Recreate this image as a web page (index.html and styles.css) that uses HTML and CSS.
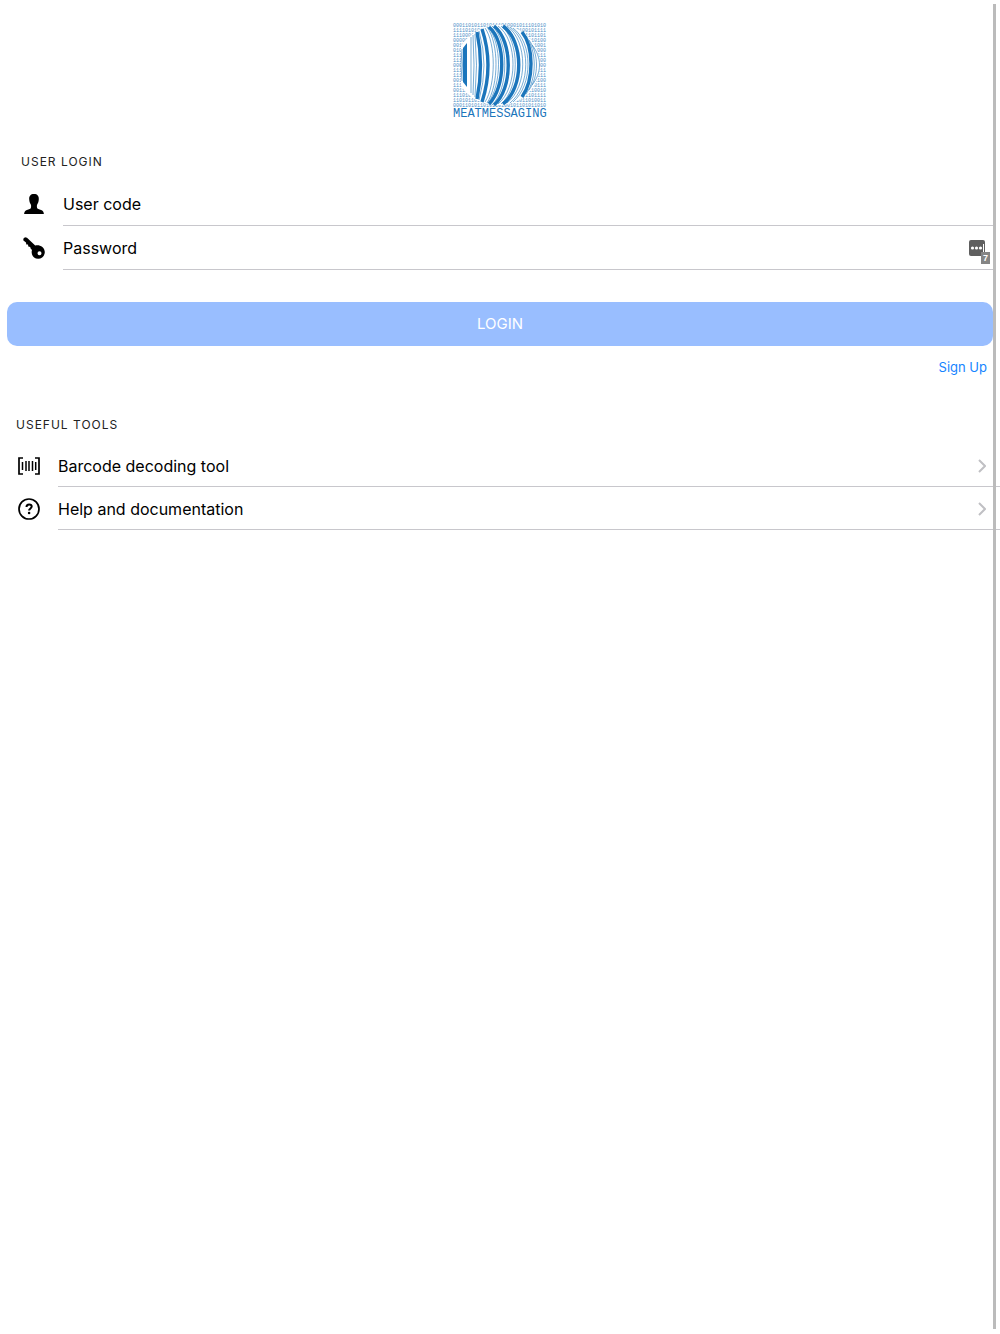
FILE: index.html
```html
<!DOCTYPE html>
<html lang="en">
<head>
    <meta charset="UTF-8">
    <meta name="viewport" content="width=device-width, initial-scale=1.0">
    <title>Meat Messaging</title>
    <link rel="stylesheet" href="styles.css">
</head>
<body>

<header class="logo">
    <svg width="96" height="96" viewBox="0 0 96 96" role="img" aria-label="Meatmessaging">
        <!-- Binary background -->
        <g class="logo-bits">
            <text x="1" y="4">0001101011010111010001011101010</text>
            <text x="1" y="9">1111010101101011010110100101111</text>
            <text x="1" y="14">1110001011010010110101101101101</text>
            <text x="1" y="19">0000010110101101001011010110100</text>
            <text x="1" y="24">0010101101001011010110101101001</text>
            <text x="1" y="29">0101101011010110100101101011000</text>
            <text x="1" y="34">1111010110101101011010010110111</text>
            <text x="1" y="39">1110101101011010010110101101100</text>
            <text x="1" y="44">0001011010010110101101011010000</text>
            <text x="1" y="49">1111010110101101001011010110111</text>
            <text x="1" y="54">1110101101001011010110101101111</text>
            <text x="1" y="59">0010110101101011010010110101100</text>
            <text x="1" y="64">1111010010110101101011010110111</text>
            <text x="1" y="69">0011010110101101001011010110010</text>
            <text x="1" y="74">1110101101011010110100101101111</text>
            <text x="1" y="79">1101011010010110101101011010011</text>
            <text x="1" y="84">0001101011010110100101101011010</text>
        </g>
        <!-- Barcode globe -->
        <g transform="translate(1)">
            <path fill="#fff" d="M8 23C17 10 30 2 45 2c24 0 42 18 42 40S69 82 45 82C30 82 17 76 8 63z"/>
            <path fill="#1b75bb" d="M10 25L14 20V64L10 59Q9 42 10 25z"/>
            <g class="logo-thick">
                <path d="M24 9Q31 42 24 76"/>
                <path d="M29 6Q41 42 29 79"/>
                <path d="M36 4C53 18 53 64 36 81"/>
                <path d="M41 3C60 18 60 66 41 82"/>
                <path d="M50 3C71 18 71 65 50 81"/>
                <path d="M69 9C81 24 81 57 69 74"/>
            </g>
            <g class="logo-thin">
                <path d="M9 26Q7 42 9 58"/>
                <path d="M18 14Q18 42 18 70"/>
                <path d="M20 12Q22 42 20 72"/>
                <path d="M22 11Q25 42 22 74"/>
                <path d="M26 8Q36 42 26 77"/>
                <path d="M32 5C43 20 43 62 32 79"/>
                <path d="M34 4C46 20 46 62 34 80"/>
                <path d="M35 4C49 20 49 62 35 80"/>
                <path d="M39 3C56 18 56 66 39 82"/>
                <path d="M45 3C65 17 65 65 45 81"/>
                <path d="M48 3C67 17 67 65 48 81"/>
                <path d="M54 3C75 18 75 64 54 80"/>
                <path d="M57 4C78 19 78 63 57 80"/>
                <path d="M60 5C80 20 80 62 60 79"/>
                <path d="M73 13C84 28 84 56 73 71"/>
                <path d="M76 17C86 31 86 53 76 67"/>
                <path d="M79 22C89 34 89 50 79 62"/>
            </g>
        </g>
        <text class="logo-name" x="1" y="94">MEATMESSAGING</text>
    </svg>
</header>

<main>
    <form class="login">
        <h2>User login</h2>

        <div class="field">
            <label for="userCode" aria-label="User code">
                <svg width="22" height="22" viewBox="0 0 22 22">
                    <path d="M11 1c3.400 0 5 2 4.800 5.200-.1 2.600-.9 4-1.600 5.300-.5.800-.4 3.300.2 4 .9 1 3.600 1.200 4.800 1.900 1.200.8 1.500 2 1.700 3.600H1.100c.2-1.600.5-2.800 1.700-3.600 1.200-.7 3.900-.9 4.800-1.900.6-.7.7-3.200.2-4C7.100 10.200 6.300 8.800 6.200 6.200 6 3 7.600 1 11 1z"/>
                </svg>
            </label>
            <input type="text" id="userCode" placeholder="User code">
        </div>

        <div class="field">
            <label for="password" aria-label="Password">
                <svg width="22" height="22" viewBox="0 0 22 22">
                    <path fill-rule="evenodd" d="M.3 1.700L2 .2l2 .5L12.200 8.500c4-1.300 9.600 1.500 9.600 6.600 0 3.700-3 6.700-6.600 6.700-4.700 0-7.600-4.500-6.200-8.800L7.600 11.500l-.4-1.600-1.900-.3-.3-2-1.700-.2-.3-2L.4 3.500zM16.500 14.300a2 2 0 1 0 .01 4 2 2 0 0 0 0-4z"/>
                </svg>
            </label>
            <input type="password" id="password" placeholder="Password">
            <button type="button" class="fill" aria-label="Saved passwords">
                <svg width="16" height="16" viewBox="0 0 16 16">
                    <rect width="16" height="16" rx="2" fill="#5f5f5f"/>
                    <circle cx="3.500" cy="8" r="1.600" fill="#fff"/>
                    <circle cx="7.500" cy="8" r="1.600" fill="#fff"/>
                    <circle cx="11.500" cy="8" r="1.600" fill="#fff"/>
                    <path d="M14.500 4v8" stroke="#fff"/>
                </svg>
                <span class="count">7</span>
            </button>
        </div>

        <button type="submit" class="submit" disabled>LOGIN</button>
        <a href="#" class="signup">Sign Up</a>
    </form>

    <nav class="tools">
        <h2>Useful tools</h2>

        <a href="#" class="tool">
            <svg width="22" height="22" viewBox="0 0 22 22" fill="none" stroke="#000" stroke-width="1.700">
                <path d="M5 3H1v16h4M17 3h4v16h-4"/>
                <path d="M4.500 7v8M8 6v10M11 6v10M14.500 6v10M17.700 7v8" stroke-width="1.500"/>
            </svg>
            <span>Barcode decoding tool</span>
            <svg class="arrow" width="8" height="14" viewBox="0 0 8 14"><path d="M1 1l6 6-6 6"/></svg>
        </a>

        <a href="#" class="tool">
            <svg width="22" height="22" viewBox="0 0 22 22" fill="none" stroke="#000">
                <circle cx="11" cy="11" r="10" stroke-width="1.700"/>
                <path d="M8.500 9c0-1.700 1-2.600 2.600-2.600s2.600.9 2.600 2.200c0 1.800-2.600 1.900-2.600 3.900" stroke-width="2"/>
                <circle cx="11.100" cy="15" r="1.300" fill="#000" stroke="none"/>
            </svg>
            <span>Help and documentation</span>
            <svg class="arrow" width="8" height="14" viewBox="0 0 8 14"><path d="M1 1l6 6-6 6"/></svg>
        </a>
    </nav>
</main>

<div class="scrollbar"></div>

</body>
</html>
```

FILE: styles.css
```css
* {
    box-sizing: border-box;
}

body {
    font-family: Inter, Roboto, sans-serif;
    background-color: #fff;
    margin: 0;
    color: #000;
}

.logo {
    display: flex;
    justify-content: center;
    padding-top: 23px;
}

.logo svg {
    overflow: visible;
}

.logo-bits {
    font-family: "Liberation Mono", monospace;
    font-size: 5px;
    fill: #4a90c8;
}

.logo-thick,
.logo-thin {
    fill: none;
    stroke: #1b75bb;
    stroke-width: 3.4;
}

.logo-thin {
    stroke-width: 0.6;
}

.logo-name {
    font-family: "Liberation Mono", monospace;
    font-size: 12px;
    fill: #1b75bb;
}

h2 {
    margin: 0;
    font-size: 12px;
    line-height: 16px;
    font-weight: 400;
    letter-spacing: 1px;
    text-transform: uppercase;
    color: #222;
}

.login {
    display: flex;
    flex-direction: column;
    padding: 35px 7px 0;
}

.login h2 {
    padding: 0 14px 12px;
}

.field {
    display: flex;
    align-items: center;
    height: 44px;
    margin-left: 56px;
    border-bottom: 1px solid #c8c7cc;
}

.field label {
    display: flex;
    width: 40px;
    margin-left: -40px;
}

.field input {
    flex: 1;
    padding: 0;
    border: 0;
    outline: 0;
    background: none;
    font-family: inherit;
    font-size: 16px;
}

.field input::placeholder {
    color: #000;
    opacity: 1;
}

.fill {
    position: relative;
    display: flex;
    margin-right: 8px;
    padding: 0;
    border: 0;
    background: none;
}

.count {
    position: absolute;
    right: -5px;
    bottom: -8px;
    width: 9px;
    height: 12px;
    background-color: #858585;
    color: #fff;
    font-size: 9px;
    line-height: 12px;
    font-weight: 700;
    text-align: center;
}

.submit {
    height: 44px;
    margin-top: 32px;
    padding: 0 0 2px;
    border: 0;
    border-radius: 10px;
    background-color: #99beff;
    color: #fff;
    font-family: inherit;
    font-size: 15px;
}

.signup {
    align-self: flex-end;
    margin-top: 13px;
    padding-right: 6px;
    font-size: 13px;
    line-height: 16px;
    color: #1584ff;
    text-decoration: none;
}

.tools {
    padding-top: 42px;
}

.tools h2 {
    padding: 0 16px 11px;
}

.tool {
    display: flex;
    align-items: center;
    height: 43px;
    margin-left: 58px;
    padding: 1px 14px 0 0;
    border-bottom: 1px solid #c8c7cc;
    color: #000;
    font-size: 16px;
    text-decoration: none;
}

.tool svg:first-child {
    flex: none;
    margin-left: -40px;
    margin-right: 18px;
}

.tool span {
    flex: 1;
}

.arrow {
    fill: none;
    stroke: #c0c0c4;
    stroke-width: 2;
}

/* Scroll indicator over the page */
.scrollbar {
    position: fixed;
    top: 4px;
    right: 4px;
    bottom: 5px;
    width: 3px;
    background-color: #bbb;
}
```
